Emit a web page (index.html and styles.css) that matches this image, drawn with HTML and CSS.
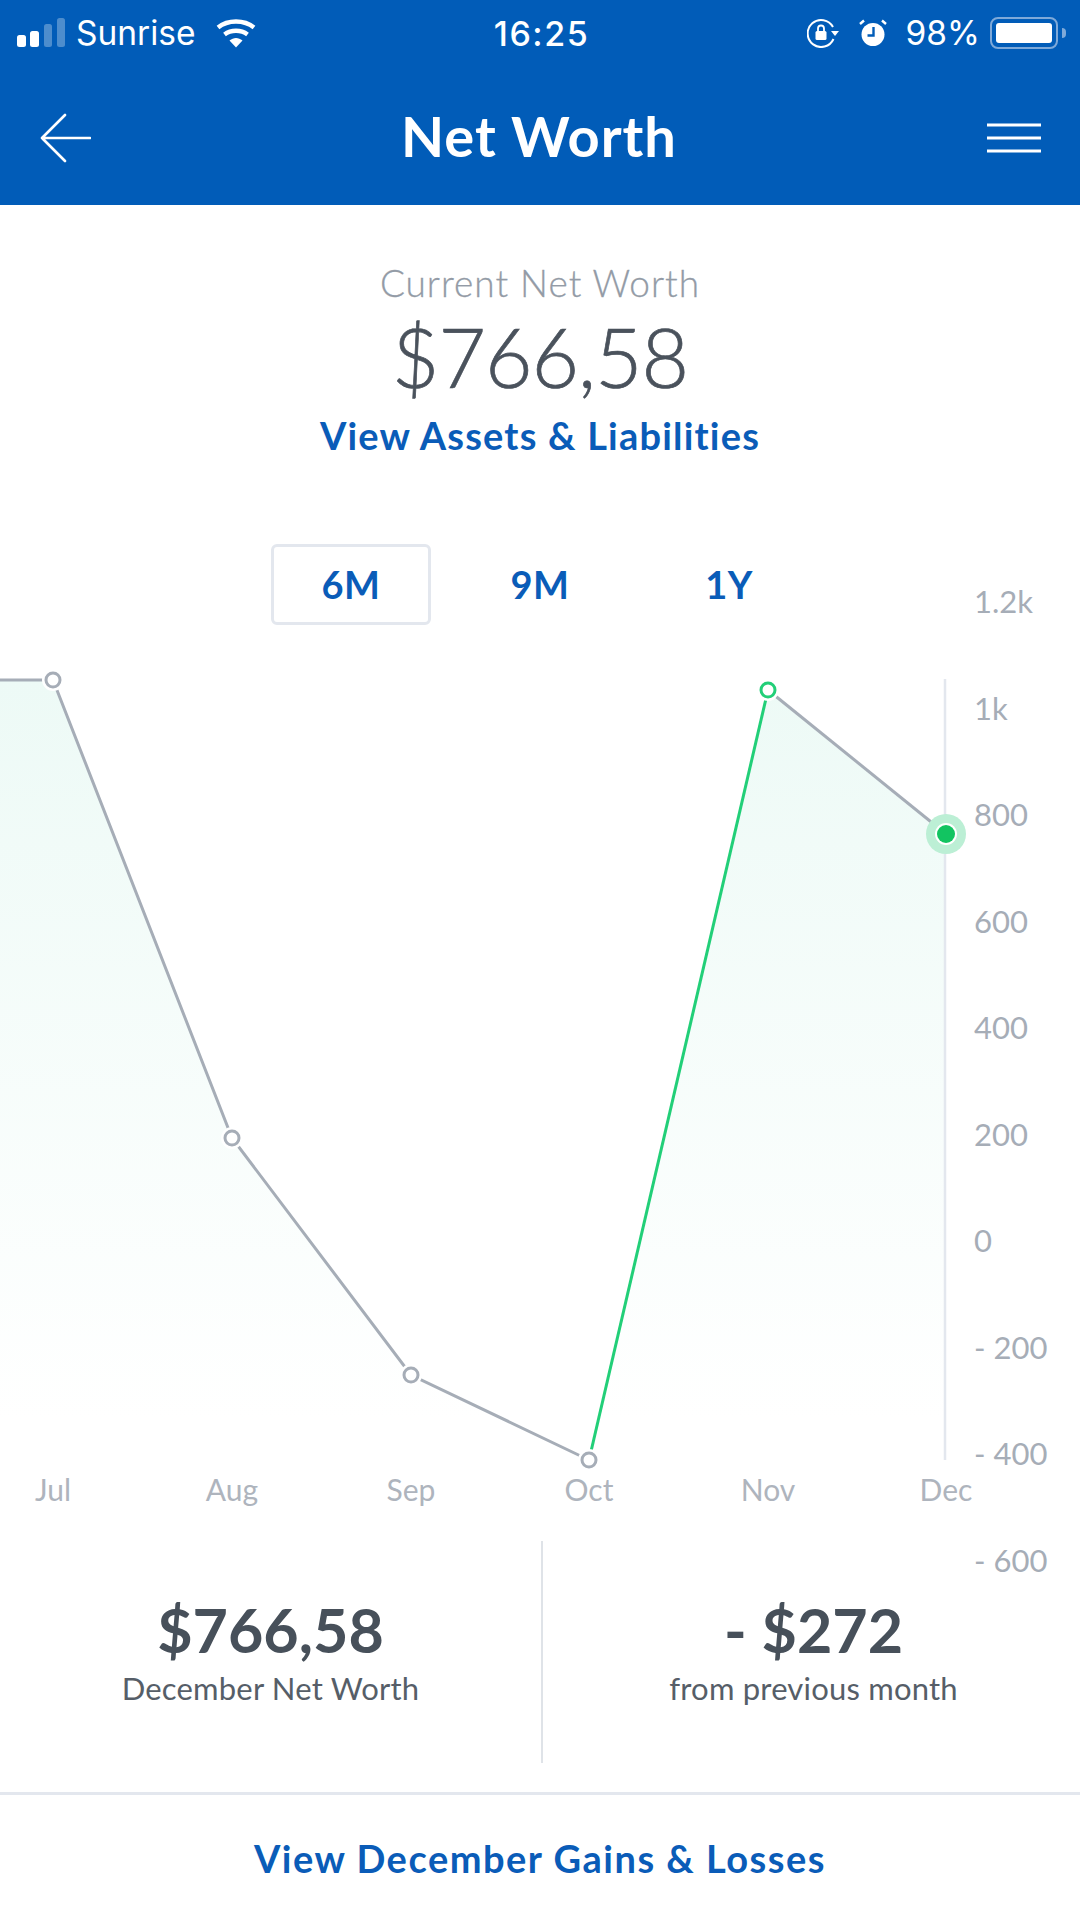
FILE: index.html
```html
<!DOCTYPE html><html lang="en">
<head>
    <meta charset="UTF-8">
    <title>Net Worth</title>
    <link rel="stylesheet" href="styles.css">
</head>
<body>
<div class="header">
    <div class="status-bar">
        <div class="status-left">
            <svg class="signal" width="48" height="30" viewBox="0 0 48 30">
                <rect x="0" y="17" width="9" height="12" rx="2.5" fill="#fff"/>
                <rect x="13" y="13" width="9" height="16" rx="2.5" fill="#fff"/>
                <rect x="27" y="6" width="8" height="23" rx="2.5" fill="#fff" opacity="0.3"/>
                <rect x="40" y="0" width="8" height="29" rx="2.5" fill="#fff" opacity="0.3"/>
            </svg>
            <span class="carrier">Sunrise</span>
            <svg class="wifi" width="40" height="30" viewBox="0 0 40 30">
                <path d="M2 9.5C12 1.500 28 1.500 38 9.5" fill="none" stroke="#fff" stroke-width="4.400"/>
                <path d="M8.500 16.500C15 11.500 25 11.500 31.500 16.500" fill="none" stroke="#fff" stroke-width="4.400"/>
                <path d="M13.500 22.500C17.500 19 22.500 19 26.500 22.500L20 29.500Z" fill="#fff"/>
            </svg>
        </div>
        <span class="clock">16:25</span>
        <div class="status-right">
            <svg width="32" height="30" viewBox="0 0 32 30">
                <path d="M26 9A13.500 13.500 0 1 0 26.500 21" fill="none" stroke="#fff" stroke-width="2"/>
                <path d="M24 13H32L28 18Z" fill="#fff"/>
                <rect x="8.500" y="13" width="11" height="9" rx="1.500" fill="#fff"/>
                <path d="M11 13V10.500A3 3 0 0 1 17 10.500V13" fill="none" stroke="#fff" stroke-width="1.800"/>
            </svg>
            <svg class="alarm" width="28" height="30" viewBox="0 0 28 30">
                <circle cx="14" cy="16.500" r="11.500" fill="#fff"/>
                <path d="M14.500 9V17.500H8.500" fill="none" stroke="#015cb8" stroke-width="2.400"/>
                <path d="M1 6L5 2.500M27 6L23 2.500" stroke="#fff" stroke-width="2.400"/>
            </svg>
            <span class="battery-pct">98%</span>
            <div class="battery"><div class="battery-fill"></div></div>
            <div class="battery-nub"></div>
        </div>
    </div>
    <div class="nav-bar">
        <svg width="52" height="50" viewBox="0 0 52 50">
            <path d="M51 25H3M26 2L3 25L26 48" fill="none" stroke="#fff" stroke-width="2.600" stroke-linecap="round" stroke-linejoin="round"/>
        </svg>
        <span class="nav-title">Net Worth</span>
        <svg width="54" height="30" viewBox="0 0 54 30">
            <path d="M0 2H54M0 15H54M0 28H54" stroke="#fff" stroke-width="2.800"/>
        </svg>
    </div>
</div>

<div class="summary">
    <div class="summary-label">Current Net Worth</div>
    <div class="summary-value">$766,58</div>
    <div class="link-text summary-link">View Assets &amp; Liabilities</div>
</div>

<div class="chart">
    <svg class="chart-svg" width="1080" height="1040" viewBox="0 544 1080 1040">
        <defs>
            <linearGradient id="areaFill" gradientUnits="userSpaceOnUse" x1="0" y1="680" x2="0" y2="1420">
                <stop offset="0" stop-color="#edfaf6"/>
                <stop offset="1" stop-color="#ffffff"/>
            </linearGradient>
        </defs>

        <path d="M0 680H53L232 1138L411 1375L589 1460L768 690L946 834V1460H0Z" fill="url(#areaFill)"/>
        <line x1="945" y1="679" x2="945" y2="1460" class="axis"/>

        <polyline points="0,680 53,680 232,1138 411,1375 589,1460" class="line-grey"/>
        <line x1="589" y1="1460" x2="768" y2="690" class="line-green"/>
        <line x1="768" y1="690" x2="946" y2="834" class="line-grey"/>

        <circle cx="53" cy="680" r="11" fill="#fff"/>
        <circle cx="232" cy="1138" r="11" fill="#fff"/>
        <circle cx="411" cy="1375" r="11" fill="#fff"/>
        <circle cx="589" cy="1460" r="11" fill="#fff"/>
        <circle cx="768" cy="690" r="11" fill="#fff"/>
        <circle cx="53" cy="680" r="7" class="dot-grey"/>
        <circle cx="232" cy="1138" r="7" class="dot-grey"/>
        <circle cx="411" cy="1375" r="7" class="dot-grey"/>
        <circle cx="589" cy="1460" r="7" class="dot-grey"/>
        <circle cx="768" cy="690" r="7" class="dot-green"/>

        <circle cx="946" cy="834" r="20" fill="#bcefd5"/>
        <circle cx="946" cy="834" r="11" fill="#fff"/>
        <circle cx="946" cy="834" r="9" fill="#12c461"/>

        <text x="974" y="613" class="y-label">1.2k</text>
        <text x="974" y="720" class="y-label">1k</text>
        <text x="974" y="826" class="y-label">800</text>
        <text x="974" y="933" class="y-label">600</text>
        <text x="974" y="1039" class="y-label">400</text>
        <text x="974" y="1146" class="y-label">200</text>
        <text x="974" y="1252" class="y-label">0</text>
        <text x="974" y="1359" class="y-label">- 200</text>
        <text x="974" y="1465" class="y-label">- 400</text>
        <text x="974" y="1572" class="y-label">- 600</text>

        <text x="53" y="1501" class="x-label">Jul</text>
        <text x="232" y="1501" class="x-label">Aug</text>
        <text x="411" y="1501" class="x-label">Sep</text>
        <text x="589" y="1501" class="x-label">Oct</text>
        <text x="768" y="1501" class="x-label">Nov</text>
        <text x="946" y="1501" class="x-label">Dec</text>
    </svg>

    <div class="tabs">
        <div class="tab active">6M</div>
        <div class="tab">9M</div>
        <div class="tab">1Y</div>
    </div>
</div>

<div class="stats">
    <div class="stat">
        <div class="stat-value">$766,58</div>
        <div class="stat-label">December Net Worth</div>
    </div>
    <div class="stat stat-right">
        <div class="stat-value">- $272</div>
        <div class="stat-label">from previous month</div>
    </div>
</div>

<div class="footer">
    <span class="link-text footer-link">View December Gains &amp; Losses</span>
</div>
</body>
</html>
```

FILE: styles.css
```css
body {
    margin: 0;
    padding: 0;
    width: 1080px;
    height: 1920px;
    overflow: hidden;
    background: #fff;
    font-family: Lato, "Open Sans", sans-serif;
}

.header {
    height: 205px;
    background: #015cb8;
    color: #fff;
}

.status-bar {
    height: 66px;
    padding: 0 14px 0 17px;
    display: grid;
    grid-template-columns: 1fr auto 1fr;
    align-items: center;
    font-family: Inter, Roboto, sans-serif;
    font-size: 33.500px;
}

.status-left, .status-right {
    display: flex;
    align-items: center;
}

.status-right {
    justify-content: flex-end;
}

.carrier {
    margin-left: 11px;
}

.wifi {
    margin-left: 20px;
}

.clock {
    font-size: 34px;
    font-weight: 500;
    letter-spacing: 1.500px;
}

.alarm {
    margin-left: 20px;
}

.battery-pct {
    margin-left: 19px;
}

.battery {
    margin-left: 10px;
    width: 68px;
    height: 32px;
    box-sizing: border-box;
    border: 2px solid #7ea9d9;
    border-radius: 8px;
    padding: 4px;
}

.battery-fill {
    height: 100%;
    background: #fff;
    border-radius: 3px;
}

.battery-nub {
    width: 4px;
    height: 10px;
    margin-left: 4px;
    background: #7ea9d9;
    border-radius: 0 4px 4px 0;
}

.nav-bar {
    height: 139px;
    padding: 5px 39px 0 39px;
    box-sizing: border-box;
    display: flex;
    justify-content: space-between;
    align-items: center;
}

.nav-title {
    margin-bottom: 6px;
    font-size: 56px;
    font-weight: 700;
    letter-spacing: 1px;
}

.summary {
    padding-top: 54px;
    text-align: center;
}

.summary-label {
    height: 49px;
    line-height: 48px;
    font-size: 37px;
    font-weight: 300;
    letter-spacing: 1px;
    color: #939ba6;
    -webkit-text-stroke: 0.3px #939ba6;
}

.summary-value {
    height: 96px;
    line-height: 96px;
    font-size: 82px;
    font-weight: 300;
    letter-spacing: -1px;
    color: #4a525c;
    -webkit-text-stroke: 0.7px #4a525c;
}

.summary-link {
    margin-top: 7px;
}

.link-text {
    font-size: 38px;
    line-height: 48px;
    font-weight: 700;
    letter-spacing: 1.200px;
    color: #0a5cb8;
}

.footer-link {
    letter-spacing: 1.500px;
}

.chart {
    position: relative;
    margin-top: 85px;
    height: 997px;
}

.chart-svg {
    position: absolute;
    left: 0;
    top: 0;
}

.tabs {
    position: relative;
    display: flex;
    justify-content: center;
    gap: 29px;
}

.tab {
    width: 160px;
    height: 81px;
    box-sizing: border-box;
    line-height: 81px;
    text-align: center;
    font-size: 38px;
    font-weight: 700;
    letter-spacing: 0.500px;
    color: #0a5cb8;
}

.tab.active {
    border: 3px solid #e3e7ee;
    border-radius: 6px;
    line-height: 75px;
}

.axis {
    stroke: #e3e7ee;
    stroke-width: 2.500;
}

.line-grey {
    fill: none;
    stroke: #a6adb7;
    stroke-width: 3;
}

.line-green {
    stroke: #22cf78;
    stroke-width: 3;
}

.dot-grey, .dot-green {
    fill: #fff;
    stroke-width: 3;
}

.dot-grey {
    stroke: #a6adb7;
}

.dot-green {
    stroke: #22cf78;
}

.y-label, .x-label {
    font-family: Lato, "Open Sans", sans-serif;
    font-size: 31px;
    fill: #a6adb7;
}

.x-label {
    font-size: 30px;
    text-anchor: middle;
    fill: #aeb4bd;
}

.stats {
    height: 222px;
    display: grid;
    grid-template-columns: 541px 1fr;
}

.stat {
    text-align: center;
    padding-top: 54px;
    box-sizing: border-box;
}

.stat-right {
    border-left: 2px solid #dfe3e8;
    padding-left: 4px;
}

.stat-value {
    height: 70px;
    line-height: 70px;
    font-size: 61px;
    font-weight: 700;
    color: #47505a;
}

.stat-label {
    height: 46px;
    line-height: 46px;
    font-size: 31px;
    letter-spacing: 0.200px;
    color: #565e68;
}

.footer {
    margin-top: 29px;
    border-top: 3px solid #e3e7ee;
    padding-top: 39px;
    text-align: center;
}
```
